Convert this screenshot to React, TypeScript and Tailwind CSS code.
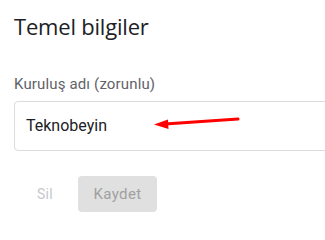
export default function App() {
  return (
    <div className="w-[325px] h-[222px] overflow-hidden bg-white font-['Roboto',sans-serif]">
      <div className="pl-[14px] pt-[11px]">
        <h2 className="text-[22px] leading-[30px] text-[#202124] font-['Open_Sans',sans-serif] tracking-[-0.2px]">Temel bilgiler</h2>

        <div className="mt-[33px] text-[15px] leading-[20px] tracking-[0.15px] text-[#5f6368]">Kuruluş adı (zorunlu)</div>

        <div className="relative mt-[7px] w-[340px] h-[50px] rounded-[4px] border border-[#dadce0] flex items-center pl-[11px]">
          <span className="text-[16px] text-[#202124]">Teknobeyin</span>
          <svg className="absolute left-[138px] top-[12px]" width="90" height="16" viewBox="0 0 90 16">
            <line x1="12" y1="10" x2="85" y2="5" stroke="#ff0000" strokeWidth="3" strokeLinecap="round" />
            <polygon points="1,10.5 15,5.5 15.5,15" fill="#ff0000" />
          </svg>
        </div>

        <div className="mt-[25px] flex items-center">
          <button className="ml-[23px] text-[14px] text-[#c4c7cb] tracking-[0.3px]">Sil</button>
          <button className="ml-[25px] w-[79px] h-[36px] rounded-[4px] bg-[#e0e0e0] text-[15px] text-[#a0a0a0] tracking-[0.4px]">Kaydet</button>
        </div>
      </div>
    </div>
  );
}
